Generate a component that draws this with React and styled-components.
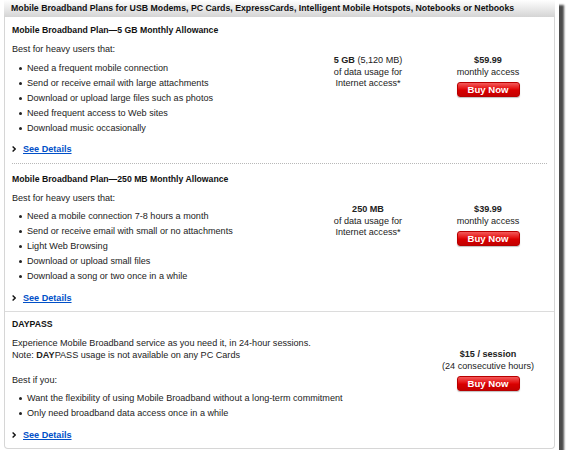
import React from "react";
import styled, { createGlobalStyle } from "styled-components";

const GlobalStyle = createGlobalStyle`
  html, body {
    margin: 0;
    padding: 0;
    background: #ffffff;
  }
  body {
    font-family: "Liberation Sans", Arial, sans-serif;
    color: #222;
  }
`;

const Frame = styled.div`
  width: 559px;
  height: 450px;
  background: #ffffff;
  box-shadow: 5px 5px 2px rgba(0, 0, 0, 0.7);
`;

const Panel = styled.div`
  margin-left: 4px;
  width: 551px;
  box-sizing: border-box;
  border: 1px solid #d6d6d6;
  border-top: none;
  border-radius: 0 0 4px 4px;
`;

const Header = styled.div`
  height: 17px;
  line-height: 17px;
  padding-left: 7px;
  margin: 0 -1px;
  background: linear-gradient(#ffffff, #f0f0f0 35%, #d4d4d4);
  font-size: 8.75px;
  font-weight: bold;
  color: #111;
  white-space: nowrap;
`;

const Section = styled.div`
  margin: 0 7px 0 7px;
  padding-top: ${(p) => p.$top}px;
  padding-bottom: ${(p) => p.$bottom}px;
  border-bottom: ${(p) => (p.$dotted ? "1px dotted #b8b8b8" : "none")};
`;

const DayPass = styled.div`
  border-top: 1px solid #dcdcdc;
  padding: 6px 7px 7px 7px;
`;

const Title = styled.div`
  font-size: 8.7px;
  font-weight: bold;
  line-height: 12px;
  color: #111;
`;

const Body = styled.div`
  margin-top: 7px;
  padding-right: 4px;
  display: grid;
  grid-template-columns: 1fr 110px 110px;
  column-gap: 10px;
`;

const Left = styled.div`
  grid-column: ${(p) => (p.$wide ? "1 / 3" : "1 / 2")};
  font-size: 9.1px;
  line-height: 12px;
`;

const Para = styled.div`
  margin-top: ${(p) => p.$gap || 0}px;
  white-space: nowrap;
`;

const List = styled.ul`
  list-style: none;
  margin: ${(p) => p.$gap}px 0 0 0;
  padding: 0 0 0 15px;

  li {
    position: relative;
    line-height: 15px;
    white-space: nowrap;
  }

  li::before {
    content: "";
    position: absolute;
    left: -8px;
    top: 6px;
    width: 3px;
    height: 3px;
    border-radius: 50%;
    background: #222;
  }
`;

const More = styled.div`
  margin-top: ${(p) => p.$gap}px;
  display: flex;
  align-items: center;
  gap: 7px;
  line-height: 12px;

  a {
    color: #0050c8;
    font-weight: bold;
    text-decoration: underline;
  }
`;

const Col = styled.div`
  grid-column: ${(p) => p.$col};
  padding-top: 12px;
  text-align: center;
  font-size: 9.1px;
  line-height: 11.5px;
  display: flex;
  flex-direction: column;
  align-items: center;
`;

const BuyButton = styled.button`
  margin-top: 4px;
  width: 63px;
  height: 15px;
  padding: 0;
  border: 1px solid #b80000;
  border-radius: 3px;
  background: linear-gradient(#f35a5a, #e41010 45%, #d80000 55%, #c40000);
  color: #fff;
  font-family: "Liberation Sans", Arial, sans-serif;
  font-size: 9.6px;
  font-weight: bold;
  line-height: 13px;
  box-shadow: 0 1px 1px rgba(0, 0, 0, 0.25);
`;

const Chevron = () => (
  <svg width="4" height="6" viewBox="0 0 4 6">
    <path d="M0.6 0.6 L3.2 3 L0.6 5.4" fill="none" stroke="#111" strokeWidth="1.4" />
  </svg>
);

const SeeDetails = ({ gap }) => (
  <More $gap={gap}>
    <Chevron />
    <a href="#">See Details</a>
  </More>
);

const plans = [
  {
    title: "Mobile Broadband Plan\u20145 GB Monthly Allowance",
    items: [
      "Need a frequent mobile connection",
      "Send or receive email with large attachments",
      "Download or upload large files such as photos",
      "Need frequent access to Web sites",
      "Download music occasionally",
    ],
    amount: "5 GB",
    extra: " (5,120 MB)",
    price: "$59.99",
    top: 7,
    bottom: 8,
    listGap: 5.5,
    moreGap: 7.5,
    dotted: true,
  },
  {
    title: "Mobile Broadband Plan\u2014250 MB Monthly Allowance",
    items: [
      "Need a mobile connection 7-8 hours a month",
      "Send or receive email with small or no attachments",
      "Light Web Browsing",
      "Download or upload small files",
      "Download a song or two once in a while",
    ],
    amount: "250 MB",
    extra: "",
    price: "$39.99",
    top: 9,
    bottom: 7,
    listGap: 4.5,
    moreGap: 8.5,
    dotted: false,
  },
];

export default function App() {
  return (
    <>
      <GlobalStyle />
      <Frame>
        <Panel>
          <Header>
            Mobile Broadband Plans for USB Modems, PC Cards, ExpressCards, Intelligent Mobile
            Hotspots, Notebooks or Netbooks
          </Header>
          {plans.map((plan) => (
            <Section key={plan.price} $top={plan.top} $bottom={plan.bottom} $dotted={plan.dotted}>
              <Title>{plan.title}</Title>
              <Body>
                <Left>
                  <Para>Best for heavy users that:</Para>
                  <List $gap={plan.listGap}>
                    {plan.items.map((item) => (
                      <li key={item}>{item}</li>
                    ))}
                  </List>
                  <SeeDetails gap={plan.moreGap} />
                </Left>
                <Col $col="2 / 3">
                  <div>
                    <b>{plan.amount}</b>
                    {plan.extra}
                  </div>
                  <div>of data usage for</div>
                  <div>Internet access*</div>
                </Col>
                <Col $col="3 / 4">
                  <b>{plan.price}</b>
                  <div>monthly access</div>
                  <BuyButton>Buy Now</BuyButton>
                </Col>
              </Body>
            </Section>
          ))}
          <DayPass>
            <Title>DAYPASS</Title>
            <Body>
              <Left $wide>
                <Para>Experience Mobile Broadband service as you need it, in 24-hour sessions.</Para>
                <Para>
                  Note: <b>DAY</b>PASS usage is not available on any PC Cards
                </Para>
                <Para $gap={13}>Best if you:</Para>
                <List $gap={4.5}>
                  <li>Want the flexibility of using Mobile Broadband without a long-term commitment</li>
                  <li>Only need broadband data access once in a while</li>
                </List>
                <SeeDetails gap={8.5} />
              </Left>
              <Col $col="3 / 4">
                <b>$15 / session</b>
                <div>(24 consecutive hours)</div>
                <BuyButton>Buy Now</BuyButton>
              </Col>
            </Body>
          </DayPass>
        </Panel>
      </Frame>
    </>
  );
}
